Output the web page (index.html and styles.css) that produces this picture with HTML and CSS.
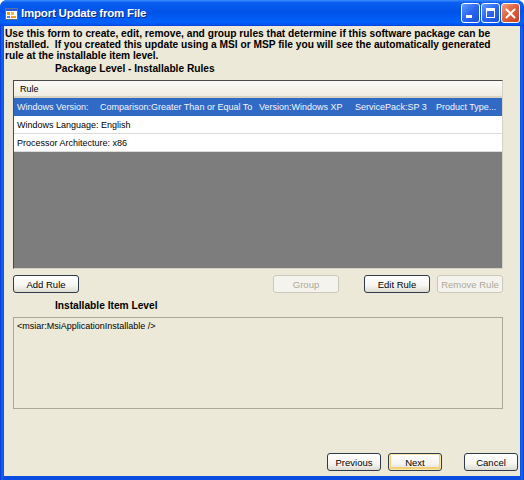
FILE: index.html
```html
<!DOCTYPE html>
<html lang="en">
<head>
  <meta charset="UTF-8">
  <title>Import Update from File</title>
  <link rel="stylesheet" href="styles.css">
</head>
<body>
  <div class="window">
    <!-- Title bar -->
    <div class="titlebar">
      <svg class="app-icon" width="13" height="12" viewBox="0 0 13 12">
        <rect x="0.5" y="0.5" width="12" height="11" fill="#fff" stroke="#5a6f9c"/>
        <rect x="1" y="1" width="11" height="2" fill="#2a5bd7"/>
        <rect x="2" y="4" width="3" height="3" fill="#f29a1d"/>
        <rect x="6" y="4" width="3" height="3" fill="#e8c23a"/>
        <rect x="2" y="8" width="3" height="2" fill="#4a86e8"/>
        <rect x="6" y="8" width="5" height="2" fill="#f29a1d"/>
      </svg>
      <span class="title">Import Update from File</span>
      <div class="caption-buttons">
        <div class="cap-btn min"><span class="min-bar"></span></div>
        <div class="cap-btn max"><span class="max-box"></span></div>
        <div class="cap-btn close">
          <svg width="11" height="11" viewBox="0 0 11 11">
            <path d="M1.5 1.5 L9.5 9.5 M9.5 1.5 L1.5 9.5" stroke="#fff" stroke-width="2" stroke-linecap="round"/>
          </svg>
        </div>
      </div>
    </div>

    <!-- Dialog body -->
    <div class="content">
      <p class="intro">Use this form to create, edit, remove, and group rules that determine if this software package can be installed.&nbsp; If you created this update using a MSI or MSP file you will see the automatically generated rule at the installable item level.</p>

      <div class="section-label">Package Level - Installable Rules</div>

      <div class="listview">
        <div class="list-header"><span class="col-head">Rule</span></div>
        <div class="list-row selected">
          <span class="c1">Windows Version:</span>
          <span class="c2">Comparison:Greater Than or Equal To</span>
          <span class="c3">Version:Windows XP</span>
          <span class="c4">ServicePack:SP 3</span>
          <span class="c5">Product Type...</span>
        </div>
        <div class="list-row">Windows Language: English</div>
        <div class="list-row">Processor Architecture: x86</div>
        <div class="list-empty"></div>
      </div>

      <div class="rule-buttons">
        <button class="btn">Add Rule</button>
        <div class="spacer"></div>
        <button class="btn" disabled>Group</button>
        <button class="btn edit">Edit Rule</button>
        <button class="btn" disabled>Remove Rule</button>
      </div>

      <div class="section-label item">Installable Item Level</div>

      <div class="textbox">&lt;msiar:MsiApplicationInstallable /&gt;</div>

      <div class="nav-buttons">
        <button class="btn nav">Previous</button>
        <button class="btn nav default">Next</button>
        <button class="btn nav cancel">Cancel</button>
      </div>
    </div>
  </div>
</body>
</html>
```

FILE: styles.css
```css
/* Page */
body {
  margin: 0;
  background: #fff;
  font-family: "Liberation Sans", Arial, sans-serif;
}

/* Window frame */
.window {
  width: 524px;
  height: 480px;
  box-sizing: border-box;
  display: flex;
  flex-direction: column;
  background: linear-gradient(to right, #0831d9 0, #166aee 2px, #0a4be0 4px, #0a4be0 520px, #166aee 522px, #0831d9 524px);
  border-radius: 7px 7px 0 0;
  overflow: hidden;
}

/* Title bar */
.titlebar {
  height: 26px;
  flex-shrink: 0;
  display: flex;
  align-items: center;
  padding: 0 4px 0 5px;
  background: linear-gradient(to bottom, #3d8dff 0%, #0a5ef0 10%, #0053e8 45%, #0062fb 85%, #0055ef 95%, #003ccf 100%);
}

.app-icon {
  margin-top: 1px;
}

.title {
  margin-left: 3px;
  color: #fff;
  font-weight: bold;
  font-size: 11.5px;
  text-shadow: 1px 1px 0 #0a2a8a;
  letter-spacing: -0.2px;
}

.caption-buttons {
  margin-left: auto;
  display: flex;
  gap: 1px;
}

.cap-btn {
  width: 17px;
  height: 18px;
  border: 1px solid #fff;
  border-radius: 3px;
  background: linear-gradient(135deg, #5d9bff 0%, #2a66f0 50%, #1a4fd8 100%);
  display: flex;
  align-items: center;
  justify-content: center;
  position: relative;
}

.cap-btn.close {
  background: linear-gradient(135deg, #f0a080 0%, #e0623c 45%, #c8401e 100%);
}

.min-bar {
  position: absolute;
  left: 4px;
  bottom: 4px;
  width: 6px;
  height: 3px;
  background: #fff;
}

.max-box {
  width: 7px;
  height: 6px;
  border: 1px solid #fff;
  border-top-width: 3px;
}

/* Dialog body */
.content {
  flex: 1;
  min-height: 0;
  margin: 0 4px 4px 4px;
  background: #ece9d8;
  display: flex;
  flex-direction: column;
  padding: 2px 0 0 9px;
}

.intro {
  margin: 0 0 0 -8px;
  font-weight: bold;
  font-size: 10.2px;
  line-height: 11px;
  color: #000;
  width: 500px;
}

.section-label {
  margin: 2px 0 0 42px;
  font-weight: bold;
  font-size: 10.2px;
  line-height: 12px;
}

/* List view */
.listview {
  margin-top: 5px;
  width: 490px;
  height: 189px;
  flex-shrink: 0;
  box-sizing: border-box;
  border: 1px solid #4a4a4a;
  border-right-color: #d6d3c6;
  border-bottom-color: #d6d3c6;
  background: #7d7d7d;
  display: flex;
  flex-direction: column;
  font-size: 9px;
}

.list-header {
  height: 17px;
  box-sizing: border-box;
  background: linear-gradient(to bottom, #fbfaf5, #efede2);
  border-bottom: 2px solid #d8d4c4;
  display: flex;
  align-items: center;
  padding-left: 6px;
}

.list-row {
  height: 18px;
  box-sizing: border-box;
  display: flex;
  align-items: center;
  padding-left: 3px;
  background: #fff;
  border-bottom: 1px solid #dcdcdc;
  white-space: nowrap;
  color: #000;
}

.list-row.selected {
  background: #316ac5;
  color: #f4f6ff;
  border-bottom-color: #316ac5;
}

.c1 { width: 83px; }
.c2 { width: 159px; }
.c3 { width: 96px; }
.c4 { width: 81px; }

.list-empty {
  flex: 1;
}

/* Buttons */
.btn {
  height: 18px;
  box-sizing: border-box;
  padding: 0;
  font-family: "Liberation Sans", Arial, sans-serif;
  font-size: 9.5px;
  color: #000;
  border: 1px solid #2f3a4a;
  border-radius: 3px;
  background: linear-gradient(to bottom, #ffffff 0%, #f6f5f0 60%, #dedbd0 100%);
}

.btn:disabled {
  color: #aca899;
  border-color: #cac8bb;
  background: #f4f3ee;
}

.rule-buttons {
  margin-top: 6px;
  width: 490px;
  display: flex;
  gap: 7px;
  flex-shrink: 0;
}

.rule-buttons .btn {
  width: 66px;
}

.rule-buttons .spacer {
  flex: 1;
}

.rule-buttons .edit {
  margin-left: 18px;
}

.section-label.item {
  margin-top: 7px;
}

/* Text box */
.textbox {
  margin-top: 5px;
  width: 490px;
  height: 92px;
  flex-shrink: 0;
  box-sizing: border-box;
  border: 1px solid #aca899;
  padding: 3px 3px;
  font-size: 9px;
  color: #000;
}

/* Bottom navigation */
.nav-buttons {
  margin-top: 44px;
  display: flex;
  justify-content: flex-end;
  padding-right: 2px;
}

.btn.nav {
  width: 54px;
}

.btn.default {
  margin-left: 7px;
  box-shadow: inset 0 0 0 1px #fbe7a8, inset 0 -1px 0 2px #f3cf78;
}

.btn.cancel {
  margin-left: 22px;
}
```
